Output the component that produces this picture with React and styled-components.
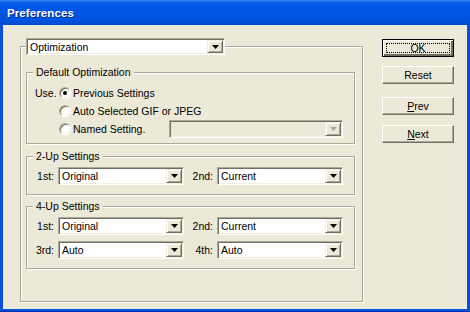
import React from "react";
import styled, { createGlobalStyle } from "styled-components";

const Global = createGlobalStyle`
  html, body { margin: 0; padding: 0; background: #ECE9D8; }
  body { font-family: "Liberation Sans", Arial, sans-serif; }
  * { box-sizing: border-box; }
`;

const Window = styled.div`
  width: 470px;
  height: 312px;
  display: flex;
  flex-direction: column;
  background: #0750DE;
  border-bottom: 1px solid #0035B5;
  padding: 0 3px 2px 3px;
  overflow: hidden;
`;

const TitleBar = styled.div`
  height: 25px;
  margin: 0 -3px;
  flex: none;
  display: flex;
  align-items: center;
  padding-left: 7px;
  background: linear-gradient(
    to bottom,
    #3D8CF6 0px,
    #0C60EC 2px,
    #0058E8 5px,
    #0055E3 14px,
    #0052DD 21px,
    #0049CF 25px
  );
`;

const Title = styled.span`
  color: #fff;
  font-family: "Liberation Sans", Arial, sans-serif;
  font-weight: bold;
  font-size: 11.5px;
  letter-spacing: 0.1px;
  text-shadow: 1px 1px 0 #0A2A8A;
  margin-top: 1px;
`;

const Body = styled.div`
  flex: 1;
  background: #ECE9D8;
  display: flex;
  align-items: flex-start;
  padding: 14px 0 0 17px;
  font-size: 10.5px;
  color: #000;
`;

const GroupBox = styled.div`
  position: relative;
  flex: none;
  width: ${(p) => p.$w}px;
  height: ${(p) => p.$h}px;
  margin-top: ${(p) => p.$mt || 0}px;
  border: 1px solid #ACA899;
  box-shadow: inset 1px 1px 0 #fff, 1px 1px 0 #fff;
  padding: ${(p) => p.$pad || "0"};
`;

const MainGroup = styled(GroupBox)`
  display: flex;
  flex-direction: column;
  margin-top: 7px;
`;

const Legend = styled.span`
  position: absolute;
  top: -7px;
  left: 6px;
  padding: 0 3px;
  line-height: 13px;
  background: #ECE9D8;
  white-space: nowrap;
`;

const LegendCombo = styled.div`
  position: absolute;
  top: -9px;
  left: 5px;
`;

const ComboBox = styled.div`
  width: ${(p) => p.$w}px;
  height: ${(p) => p.$h || 18}px;
  display: flex;
  align-items: stretch;
  border: 1px solid;
  border-color: #ACA899 #fff #fff #ACA899;
  box-shadow: inset 1px 1px 0 #716F64, inset -1px -1px 0 #F1EFE2;
  background: ${(p) => (p.$disabled ? "#ECE9D8" : "#fff")};
  padding: 1px;
`;

const ComboText = styled.span`
  flex: 1;
  display: flex;
  align-items: center;
  padding-left: 2px;
  white-space: nowrap;
  overflow: hidden;
`;

const DropButton = styled.span`
  width: 16px;
  flex: none;
  display: flex;
  align-items: center;
  justify-content: center;
  background: #ECE9D8;
  border: 1px solid;
  border-color: #F1EFE2 #716F64 #716F64 #F1EFE2;
  box-shadow: inset 1px 1px 0 #fff, inset -1px -1px 0 #ACA899;
`;

const Arrow = ({ color = "#000" }) => (
  <svg width="7" height="4" viewBox="0 0 7 4">
    <polygon points="0,0 7,0 3.5,4" fill={color} />
  </svg>
);

const Combo = ({ w, h, value = "", disabled }) => (
  <ComboBox $w={w} $h={h} $disabled={disabled}>
    <ComboText>{value}</ComboText>
    <DropButton>
      <Arrow color={disabled ? "#ACA899" : "#000"} />
    </DropButton>
  </ComboBox>
);

const OptGrid = styled.div`
  display: grid;
  grid-template-columns: 24px 110px 174px;
  grid-auto-rows: 18px;
  align-items: center;
  padding: 11px 0 0 8px;
`;

const RadioLabel = styled.label`
  display: flex;
  align-items: center;
  gap: 2px;
  white-space: nowrap;
  grid-column: ${(p) => p.$span || "auto"};
`;

const RadioCircle = styled.span`
  position: relative;
  width: 12px;
  height: 12px;
  flex: none;
  border-radius: 50%;
  background: #fff;
  border: 1px solid;
  border-color: #ACA899 #fff #fff #ACA899;
  box-shadow: inset 1px 1px 0 #716F64, inset -1px -1px 0 #F1EFE2;
  &::after {
    content: "";
    display: ${(p) => (p.$checked ? "block" : "none")};
    position: absolute;
    left: 3px;
    top: 3px;
    width: 4px;
    height: 4px;
    border-radius: 50%;
    background: #000;
  }
`;

const Radio = ({ checked, children, span }) => (
  <RadioLabel $span={span}>
    <RadioCircle $checked={checked} />
    <span>{children}</span>
  </RadioLabel>
);

const SettingsGrid = styled.div`
  display: grid;
  grid-template-columns: 31px 126px 33px 126px;
  grid-auto-rows: 18px;
  row-gap: 6px;
  align-items: center;
  padding: 10px 0 0 0;
`;

const FieldLabel = styled.span`
  text-align: right;
  padding-right: 4px;
  white-space: nowrap;
`;

const ButtonColumn = styled.div`
  display: flex;
  flex-direction: column;
  margin-left: 19px;
  width: 72px;
`;

const Button = styled.div`
  height: 18px;
  margin-top: ${(p) => p.$mt || 0}px;
  display: flex;
  align-items: center;
  justify-content: center;
  position: relative;
  background: #ECE9D8;
  border: 1px solid;
  border-color: #fff #716F64 #716F64 #fff;
  box-shadow: inset -1px -1px 0 #ACA899;
  ${(p) =>
    p.$default &&
    `
    border-color: #000;
    box-shadow: inset 1px 1px 0 #fff, inset -2px -2px 0 #716F64;
    &::after {
      content: "";
      position: absolute;
      left: 3px; top: 3px; right: 3px; bottom: 3px;
      border: 1px dotted #000;
    }
  `}
`;

const U = styled.span`
  text-decoration: underline;
`;

export default function App() {
  return (
    <>
      <Global />
      <Window>
        <TitleBar>
          <Title>Preferences</Title>
        </TitleBar>
        <Body>
          <MainGroup $w={343} $h={256} $pad="25px 6px 0 5px">
            <LegendCombo>
              <Combo w={199} h={17} value="Optimization" />
            </LegendCombo>

            <GroupBox $w={329} $h={72}>
              <Legend>Default Optimization</Legend>
              <OptGrid>
                <span>Use.</span>
                <Radio checked span="span 2">Previous Settings</Radio>
                <span />
                <Radio span="span 2">Auto Selected GIF or JPEG</Radio>
                <span />
                <Radio>Named Setting.</Radio>
                <Combo w={174} disabled />
              </OptGrid>
            </GroupBox>

            <GroupBox $w={329} $h={39} $mt={12}>
              <Legend>2-Up Settings</Legend>
              <SettingsGrid>
                <FieldLabel>1st:</FieldLabel>
                <Combo w={126} value="Original" />
                <FieldLabel>2nd:</FieldLabel>
                <Combo w={126} value="Current" />
              </SettingsGrid>
            </GroupBox>

            <GroupBox $w={329} $h={63} $mt={11}>
              <Legend>4-Up Settings</Legend>
              <SettingsGrid>
                <FieldLabel>1st:</FieldLabel>
                <Combo w={126} value="Original" />
                <FieldLabel>2nd:</FieldLabel>
                <Combo w={126} value="Current" />
                <FieldLabel>3rd:</FieldLabel>
                <Combo w={126} value="Auto" />
                <FieldLabel>4th:</FieldLabel>
                <Combo w={126} value="Auto" />
              </SettingsGrid>
            </GroupBox>
          </MainGroup>

          <ButtonColumn>
            <Button $default>OK</Button>
            <Button $mt={9}>Reset</Button>
            <Button $mt={13}>
              <span>
                <U>P</U>rev
              </span>
            </Button>
            <Button $mt={10}>
              <span>
                <U>N</U>ext
              </span>
            </Button>
          </ButtonColumn>
        </Body>
      </Window>
    </>
  );
}
